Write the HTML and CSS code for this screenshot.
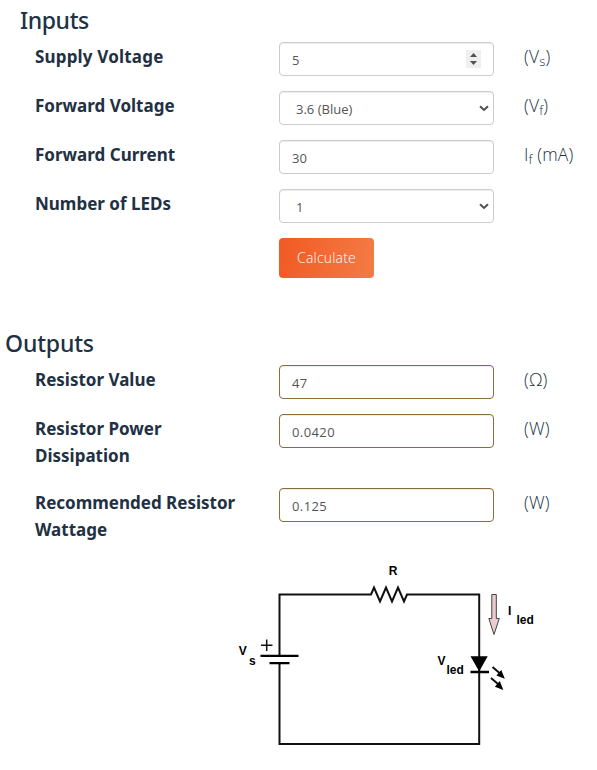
FILE: index.html
```html
<!DOCTYPE html>
<html lang="en">
<head>
<meta charset="utf-8">
<title>LED Resistor Calculator</title>
<link rel="stylesheet" href="styles.css">
</head>
<body>
<main class="calculator">
  <section class="inputs">
    <h2 class="heading heading-inset">Inputs</h2>
    <div class="row">
      <span class="label label-wide">Supply Voltage</span>
      <div class="field"><span>5</span>
        <svg class="spinner" width="15" height="18" viewBox="0 0 15 18"><path fill="#efefef" d="M0 0h15v18H0z"/><path fill="#505050" d="M4 7h7L7.500 3zM4 11h7l-3.500 4z"/></svg>
      </div>
      <span class="unit">(V<sub>s</sub>)</span>
    </div>
    <div class="row">
      <span class="label">Forward Voltage</span>
      <div class="field select"><span>3.6 (Blue)</span>
        <svg class="chevron" width="10" height="7" viewBox="0 0 10 7"><path d="M1 1.300l4 3.700 4-3.700"/></svg>
      </div>
      <span class="unit">(V<sub>f</sub>)</span>
    </div>
    <div class="row">
      <span class="label">Forward Current</span>
      <div class="field"><span>30</span></div>
      <span class="unit">I<sub>f</sub> (mA)</span>
    </div>
    <div class="row">
      <span class="label">Number of LEDs</span>
      <div class="field select"><span>1</span>
        <svg class="chevron" width="10" height="7" viewBox="0 0 10 7"><path d="M1 1.300l4 3.700 4-3.700"/></svg>
      </div>
    </div>
    <button class="calculate" type="button">Calculate</button>
  </section>
  <section class="outputs">
    <h2 class="heading">Outputs</h2>
    <div class="row">
      <span class="label">Resistor Value</span>
      <div class="field result">47</div>
      <span class="unit">(Ω)</span>
    </div>
    <div class="row">
      <span class="label">Resistor Power<br>Dissipation</span>
      <div class="field result">0.0420</div>
      <span class="unit">(W)</span>
    </div>
    <div class="row">
      <span class="label">Recommended Resistor<br>Wattage</span>
      <div class="field result">0.125</div>
      <span class="unit">(W)</span>
    </div>
  </section>
  <svg class="circuit" width="320" height="200" viewBox="230 555 320 200">
    <g class="wire">
      <path d="M279.500 655V594.500H371l3-7 6 14 6-14 6 14 6-14 6 14 3-7H479.200V744H279.500V663"/>
      <path class="thin" d="M261 645.300h11.500M266.700 639.500v11.500"/>
      <path class="plate" d="M260.500 655.800h38M269.500 663.200h20M470.500 672h18.500"/>
      <path d="M492.500 667l7 6M491 678l7 6"/>
    </g>
    <path d="M470.500 656.300h17.200L479.200 671.500zM504.800 678.800l-8.400-3.200 4.900-5.700zM503.300 690l-8.400-3.200 4.900-5.700z"/>
    <path class="current" d="M491.800 594.500h4.500v24h3L494 634.500l-5.200-16h3z"/>
    <g class="tag">
      <text x="388.700" y="575">R</text>
      <text x="238.700" y="654.500">V</text>
      <text x="249" y="664.500">s</text>
      <text x="437.500" y="664.500">V</text>
      <text x="446.500" y="673.800">led</text>
      <text x="508" y="614.500">I</text>
      <text x="516.500" y="624">led</text>
    </g>
  </svg>
</main>
</body>
</html>
```
FILE: styles.css
```css
body {
  margin: 0;
  background: #fff;
  color: #213143;
  font-family: "Open Sans", "Noto Sans", sans-serif;
}

.calculator {
  width: 597px;
  height: 770px;
  overflow: hidden;
}

.inputs {
  height: 323px;
}

.heading {
  box-sizing: border-box;
  margin: 0;
  padding-left: 5px;
  height: 42px;
  font: 500 23px/40px "Noto Sans", sans-serif;
  letter-spacing: -.15px;
}

.heading-inset {
  padding-left: 20px;
  letter-spacing: -.4px;
}

.row {
  display: grid;
  grid-template-columns: 244px 215px 1fr;
  align-items: start;
  margin-left: 35px;
  padding-bottom: 15px;
}

.label {
  padding-top: 1px;
  font: 700 17px/27px "Noto Sans", sans-serif;
  white-space: nowrap;
}

.label-wide {
  letter-spacing: .18px;
}

.row:has(br) {
  padding-bottom: 19px;
}

.field {
  display: flex;
  justify-content: space-between;
  align-items: center;
  box-sizing: border-box;
  height: 34px;
  padding: 2px 12px 0;
  border: 1px solid #ccc;
  border-radius: 4px;
  box-shadow: inset 0 1px 1px rgba(0, 0, 0, .075);
  color: #555;
  font-size: 13px;
}

.select {
  padding: 2px 4px 0 16px;
}

.result {
  border-color: #8a6d3b;
  letter-spacing: .4px;
}

.spinner {
  margin-top: -2px;
}

.chevron {
  margin-top: -2px;
  fill: none;
  stroke: #505050;
  stroke-width: 2;
}

.unit {
  padding: 1px 0 0 30px;
  font-size: 17.500px;
  font-weight: 350;
  line-height: 27px;
  letter-spacing: .15px;
  white-space: nowrap;
}

.unit sub {
  position: relative;
  bottom: -3px;
  font-size: 13px;
  line-height: 0;
  vertical-align: baseline;
}

.calculate {
  display: block;
  width: 95px;
  height: 40px;
  margin-left: 279px;
  padding: 0 0 1px;
  border: 0;
  border-radius: 4px;
  background: linear-gradient(100deg, #f15a24, #f47b45);
  color: #fff;
  font: 350 14px "Open Sans", sans-serif;
  letter-spacing: .2px;
}

.circuit {
  display: block;
  margin: -7px 0 0 230px;
}

.wire {
  fill: none;
  stroke: #111;
  stroke-width: 2;
}

.thin {
  stroke-width: 1.500;
}

.plate {
  stroke: #000;
  stroke-width: 2.300;
}

.current {
  fill: #eacbd0;
  stroke: #444;
  stroke-width: 1;
}

.tag {
  font: 700 12px "Liberation Sans", sans-serif;
}
```
